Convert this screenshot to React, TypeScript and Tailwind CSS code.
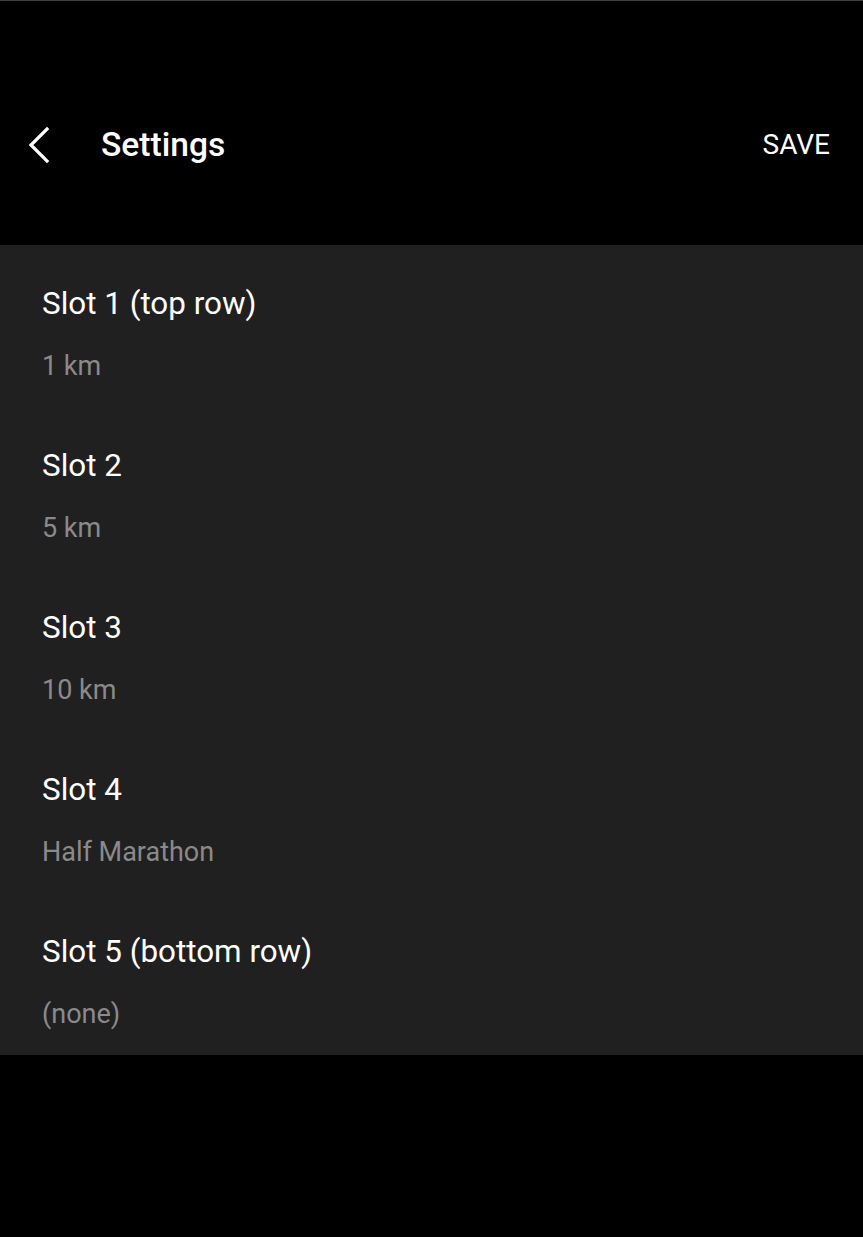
const slots = [
  { title: "Slot 1 (top row)", value: "1 km" },
  { title: "Slot 2", value: "5 km" },
  { title: "Slot 3", value: "10 km" },
  { title: "Slot 4", value: "Half Marathon" },
  { title: "Slot 5 (bottom row)", value: "(none)" },
];

export default function App() {
  return (
    <div className="h-[1237px] w-full bg-black font-['Roboto',sans-serif] border-t border-[#3c3c3c]">
      {/* Header */}
      <div className="flex h-[244px] items-center pl-[26px] pr-[33px] pt-[44px]">
        <svg width="26" height="40" viewBox="0 0 26 40" fill="none" className="text-white">
          <polyline
            points="21,4 5,20 21,36"
            stroke="currentColor"
            strokeWidth="3.2"
            strokeLinecap="square"
            strokeLinejoin="miter"
          />
        </svg>
        <h1 className="ml-[49px] text-[33.6px] font-medium leading-[40px] text-white">Settings</h1>
        <button className="ml-auto text-[28px] leading-[36px] text-white">SAVE</button>
      </div>

      {/* Slot list */}
      <div className="bg-[#202020]">
        {slots.map((s) => (
          <div key={s.title} className="flex h-[162px] flex-col px-[42px] pt-[41px]">
            <div className="text-[31.4px] leading-[36px] text-white">{s.title}</div>
            <div className="mt-[28px] text-[27px] leading-[32px] text-[#8a8a8a]">{s.value}</div>
          </div>
        ))}
      </div>
    </div>
  );
}
